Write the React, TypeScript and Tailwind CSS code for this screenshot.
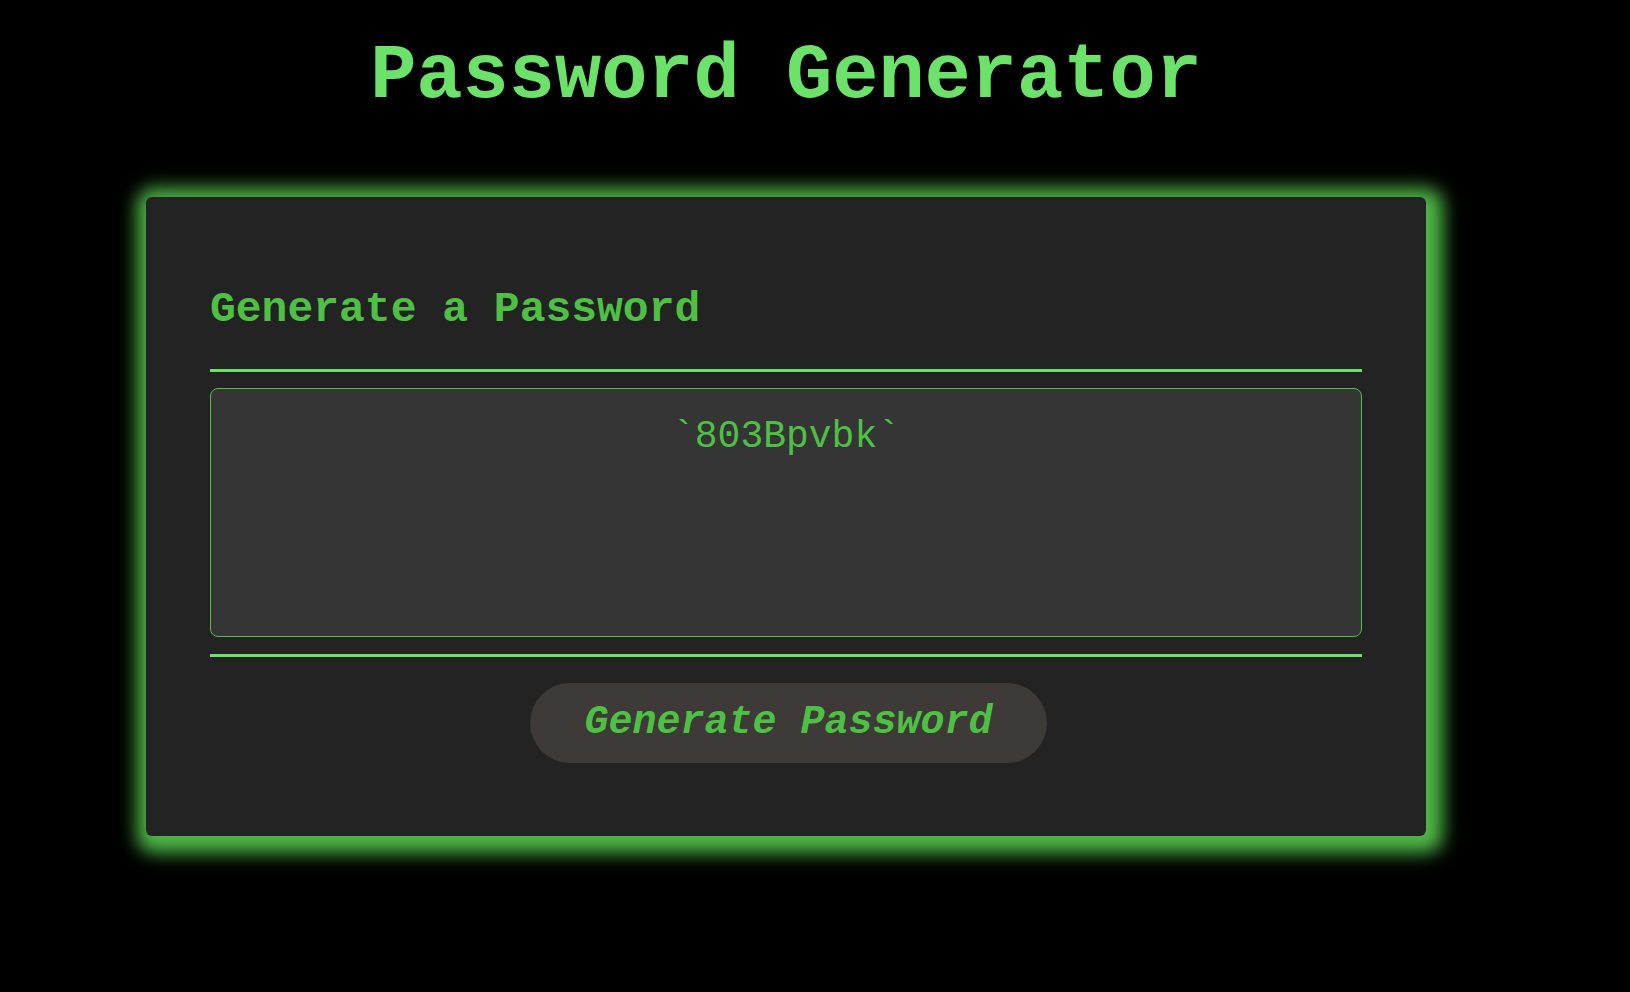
export default function App() {
  const password = '`803Bpvbk`';

  return (
    <div className="min-h-[992px] w-full bg-black font-['Courier_New','Liberation_Mono',monospace]">
      <div className="w-[1572px] pt-[34px] pb-10">
        <h1 className="text-center text-[77px] font-bold leading-[86px] text-[#6de26b]">
          Password Generator
        </h1>

        <div className="ml-[146px] mt-[77px] w-[1280px] rounded-md bg-[#232323] px-16 pt-[88px] pb-[73px] shadow-[4px_4px_18px_13px_#4fb847]">
          <h2 className="text-[43px] font-bold leading-[50px] text-[#4ec145]">Generate a Password</h2>

          <div className="mt-[34px] h-[3px] bg-[#6de06b]" />

          <div className="mt-4 h-[249px] rounded-lg border border-[#4ec145] bg-[#353535] pt-[26px] text-center text-[38px] leading-[43px] text-[#4ec145]">
            {password}
          </div>

          <div className="mt-[17px] h-[3px] bg-[#6de06b]" />

          <div className="mt-[26px] flex justify-center pl-[5px]">
            <button className="h-20 w-[517px] rounded-full bg-[#3d3a37] text-[40px] font-bold italic text-[#4ec145]">
              Generate Password
            </button>
          </div>
        </div>
      </div>
    </div>
  );
}
